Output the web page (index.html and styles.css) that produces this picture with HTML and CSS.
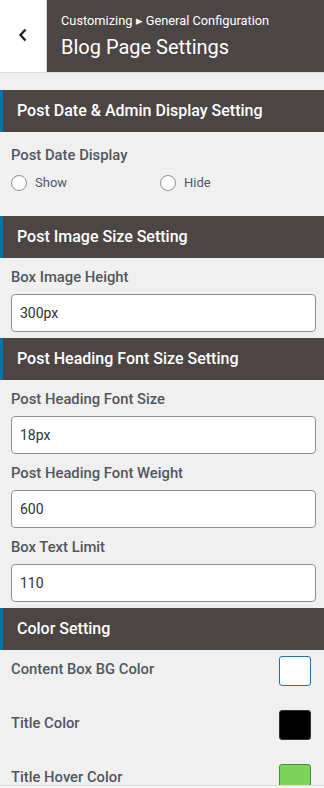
FILE: index.html
```html
<!DOCTYPE html>
<html lang="en">
<head>
    <meta charset="UTF-8">
    <meta name="viewport" content="width=device-width, initial-scale=1.0">
    <title>Blog Page Settings</title>
    <link rel="stylesheet" href="styles.css">
</head>
<body>

    <!-- HEADER -->
    <div class="panel-header">
        <button class="back-btn" aria-label="Back">
            <svg width="10" height="14" viewBox="0 0 10 14"><path d="M7.5 1.5 L2.5 7 L7.5 12.5" fill="none" stroke="#1d2327" stroke-width="2.4"/></svg>
        </button>
        <div class="panel-title">
            <span class="crumb">Customizing &#9656; General Configuration</span>
            <h1>Blog Page Settings</h1>
        </div>
    </div>

    <div class="spacer"></div>

    <!-- POST DATE -->
    <div class="section-title">Post Date &amp; Admin Display Setting</div>
    <div class="section-body first">
        <label class="field-label">Post Date Display</label>
        <div class="radio-group">
            <label class="radio"><span class="dot"></span> Show</label>
            <label class="radio"><span class="dot"></span> Hide</label>
        </div>
    </div>

    <!-- IMAGE SIZE -->
    <div class="section-title">Post Image Size Setting</div>
    <div class="section-body">
        <div class="field">
            <label class="field-label">Box Image Height</label>
            <input type="text" value="300px">
        </div>
    </div>

    <!-- HEADING FONT -->
    <div class="section-title">Post Heading Font Size Setting</div>
    <div class="section-body">
        <div class="field">
            <label class="field-label">Post Heading Font Size</label>
            <input type="text" value="18px">
        </div>
        <div class="field">
            <label class="field-label">Post Heading Font Weight</label>
            <input type="text" value="600">
        </div>
        <div class="field">
            <label class="field-label">Box Text Limit</label>
            <input type="text" value="110">
        </div>
    </div>

    <!-- COLORS -->
    <div class="section-title">Color Setting</div>
    <div class="section-body colors">
        <div class="color-row">
            <span class="field-label">Content Box BG Color</span>
            <span class="swatch white"></span>
        </div>
        <div class="color-row">
            <span class="field-label">Title Color</span>
            <span class="swatch black"></span>
        </div>
        <div class="color-row">
            <span class="field-label">Title Hover Color</span>
            <span class="swatch green"></span>
        </div>
    </div>

    <div class="footer-bar"></div>

</body>
</html>
```

FILE: styles.css
```css
body {
    font-family: Roboto, "Noto Sans", Arial, sans-serif;
    background-color: #f0f0f1;
    margin: 0;
    height: 788px;
    overflow: hidden;
    position: relative;
}

.panel-header {
    display: flex;
    height: 73px;
    border-bottom: 1px solid #dcdcde;
    box-sizing: border-box;
}

.back-btn {
    width: 47px;
    background: white;
    border: none;
    border-right: 1px solid #dcdcde;
    display: flex;
    align-items: center;
    justify-content: center;
    padding: 0 0 2px 0;
}

.panel-title {
    flex: 1;
    background-color: #4b4644;
    color: white;
    padding: 13px 0 0 14px;
}

.crumb {
    display: block;
    font-size: 12.8px;
    line-height: 16px;
}

.panel-title h1 {
    margin: 6px 0 0 0;
    font-size: 20px;
    font-weight: 400;
    line-height: 24px;
}

.spacer {
    height: 17px;
}

.section-title {
    background-color: #4b4644;
    color: white;
    height: 42px;
    line-height: 42px;
    border-left: 3px solid #0073aa;
    font-size: 16px;
    font-weight: 500;
    box-sizing: border-box;
    padding-left: 14px;
}

.section-body {
    padding: 10px 8px 6px 11px;
}

.section-body.first {
    padding-top: 14px;
    padding-bottom: 24px;
}

.field-label {
    display: block;
    font-size: 14.8px;
    font-weight: 500;
    line-height: 18px;
    color: #50575e;
}

.field {
    margin-bottom: 10px;
}

.field:last-child {
    margin-bottom: 0;
}

.field input {
    display: block;
    width: 100%;
    height: 38px;
    margin-top: 8px;
    box-sizing: border-box;
    border: 1px solid #8c8f94;
    border-radius: 4px;
    padding: 0 8px;
    font-family: inherit;
    font-size: 14px;
    color: #2c3338;
    background: white;
}

.radio-group {
    display: flex;
    margin-top: 10px;
}

.radio {
    width: 149px;
    display: flex;
    align-items: center;
    font-size: 13px;
    color: #50575e;
    line-height: 18px;
}

.dot {
    width: 14px;
    height: 14px;
    border: 1px solid #8c8f94;
    border-radius: 50%;
    background: white;
    margin-right: 8px;
}

.colors {
    padding-top: 6px;
}

.color-row {
    display: flex;
    align-items: center;
    justify-content: space-between;
    height: 30px;
    margin-bottom: 24px;
    padding-right: 5px;
}

.color-row .field-label {
    margin-top: -4px;
}

.swatch {
    width: 30px;
    height: 28px;
    border-radius: 3px;
    border: 1px solid #2c3338;
}

.swatch.white {
    background: white;
    border-color: #2271b1;
}

.swatch.black {
    background: black;
    border-color: #2c3338;
}

.swatch.green {
    background: #7ed35a;
    border-color: #4a8a3a;
}

.footer-bar {
    position: absolute;
    left: 0;
    right: 0;
    top: 785px;
    height: 3px;
    background: #f6f7f7;
    border-top: 1px solid #dcdcde;
}
```
